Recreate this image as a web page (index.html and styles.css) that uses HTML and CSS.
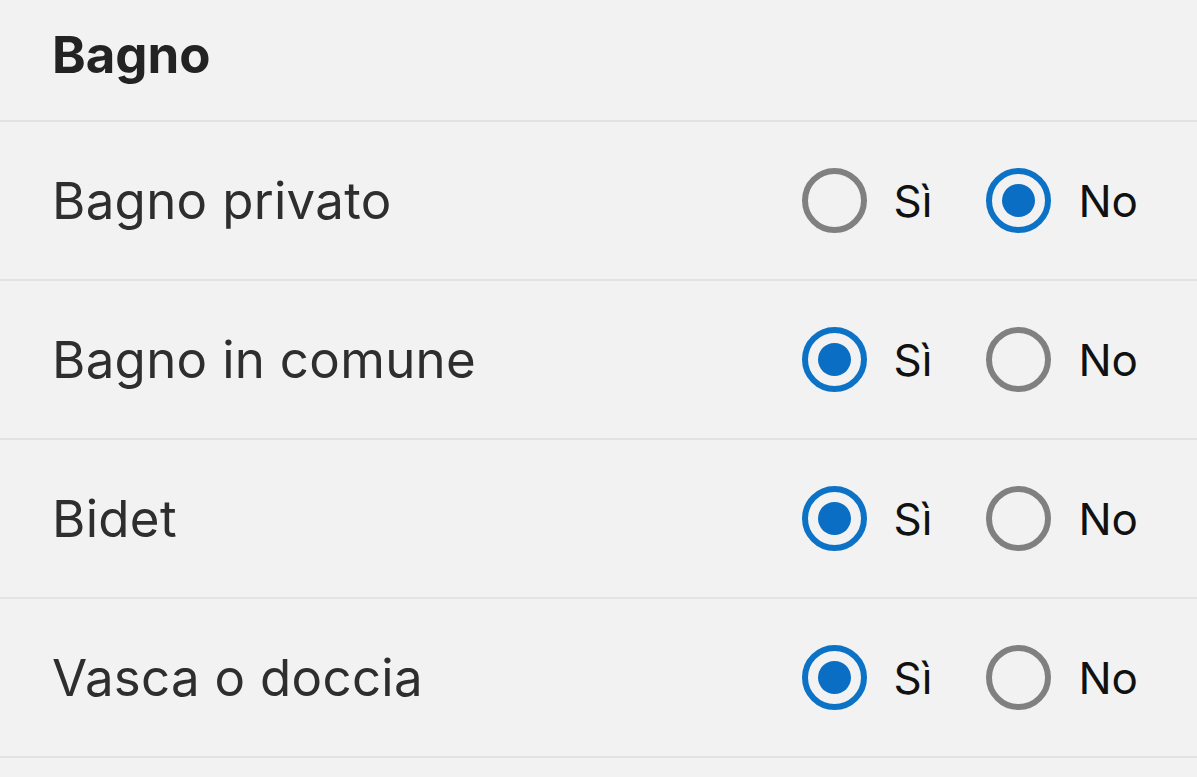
FILE: index.html
```html
<!DOCTYPE html>
<html lang="it">
<head>
<meta charset="utf-8">
<title>Bagno</title>
<link rel="stylesheet" href="styles.css">
</head>
<body>
<div class="page">
  <div class="header">Bagno</div>
  <div class="row">
    <div class="label">Bagno privato</div>
    <div class="options">
      <div class="opt"><span class="radio"></span><span class="opt-text">Sì</span></div>
      <div class="opt"><span class="radio checked"></span><span class="opt-text">No</span></div>
    </div>
  </div>
  <div class="row">
    <div class="label">Bagno in comune</div>
    <div class="options">
      <div class="opt"><span class="radio checked"></span><span class="opt-text">Sì</span></div>
      <div class="opt"><span class="radio"></span><span class="opt-text">No</span></div>
    </div>
  </div>
  <div class="row">
    <div class="label">Bidet</div>
    <div class="options">
      <div class="opt"><span class="radio checked"></span><span class="opt-text">Sì</span></div>
      <div class="opt"><span class="radio"></span><span class="opt-text">No</span></div>
    </div>
  </div>
  <div class="row">
    <div class="label">Vasca o doccia</div>
    <div class="options">
      <div class="opt"><span class="radio checked"></span><span class="opt-text">Sì</span></div>
      <div class="opt"><span class="radio"></span><span class="opt-text">No</span></div>
    </div>
  </div>
</div>
</body>
</html>
```
FILE: styles.css
```css
html, body {
  margin: 0;
  padding: 0;
  background: #f2f2f2;
}
body {
  font-family: Inter, "Noto Sans", sans-serif;
  color: #2b2b2b;
}
.page {
  width: 1197px;
  height: 777px;
  overflow: hidden;
}
.header {
  height: 122px;
  box-sizing: border-box;
  padding-left: 52px;
  padding-top: 22px;
  font-size: 51px;
  font-weight: 700;
  line-height: 66px;
  color: #232323;
  border-bottom: 2px solid #e3e3e3;
}
.row {
  height: 159px;
  box-sizing: border-box;
  border-bottom: 2px solid #e3e3e3;
  display: flex;
  align-items: center;
  justify-content: space-between;
  padding: 0 59px 0 52px;
}
.label {
  font-size: 51px;
  color: #2e2e2e;
  letter-spacing: 0.3px;
}
.options {
  display: flex;
  align-items: center;
  gap: 54px;
}
.opt {
  display: flex;
  align-items: center;
  gap: 27px;
}
.opt-text {
  font-size: 44px;
  color: #111;
}
.radio {
  width: 65px;
  height: 65px;
  box-sizing: border-box;
  border: 6.5px solid #808080;
  border-radius: 50%;
  display: flex;
  align-items: center;
  justify-content: center;
}
.radio.checked {
  border-color: #0b72c6;
}
.radio.checked::after {
  content: "";
  width: 33px;
  height: 33px;
  border-radius: 50%;
  background: #0a6fc4;
}
```
